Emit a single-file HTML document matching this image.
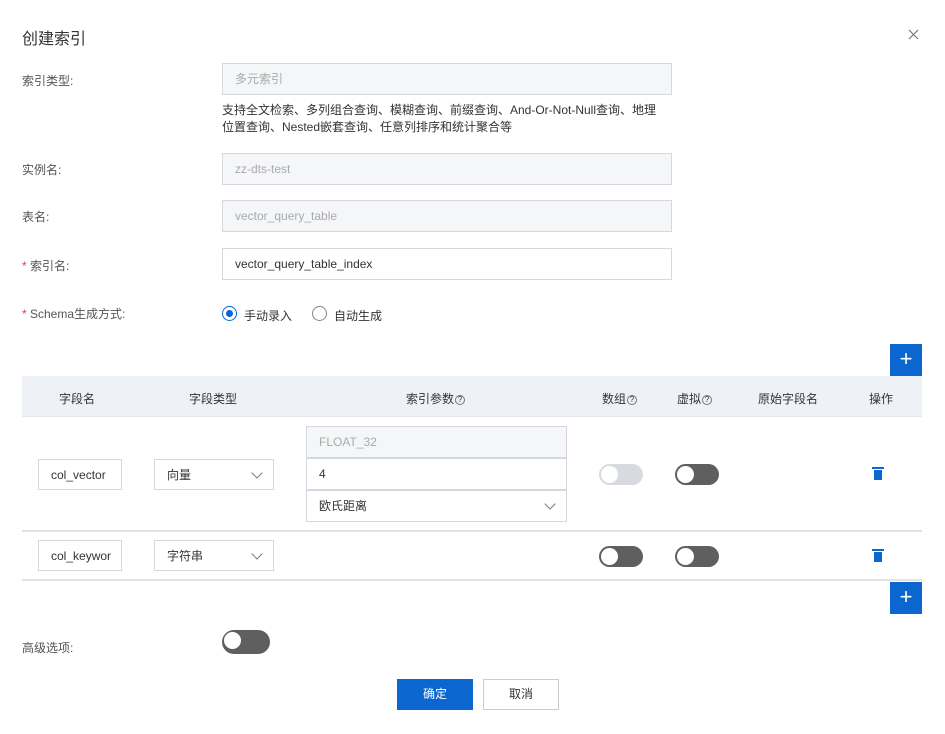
<!DOCTYPE html><html><head><meta charset="utf-8"><style>
*{box-sizing:border-box;margin:0;padding:0}
body{width:945px;height:734px;background:#fff;font-family:"Liberation Sans","Noto Sans CJK SC",sans-serif;font-size:12px;color:#333;position:relative;overflow:hidden}
.a{position:absolute}
.inp{position:absolute;border:1px solid #d5d8de;height:32px;line-height:30px;padding-left:12px;background:#fff;color:#333}
.dis{background:#f5f6f8;color:#aaa}
.lbl{position:absolute;left:22px;color:#555}
.req{color:#e4393c}
.tg{position:absolute;width:44px;height:21px;border-radius:11px;background:#5f5f5f}
.tg:after{content:"";position:absolute;left:2px;top:2px;width:17px;height:17px;border-radius:50%;background:#fff}
.tg.d{background:#d7dadf}
.th{position:absolute;top:390px;color:#333;text-align:center}
.plus{position:absolute;width:32px;height:32px;background:#0c66d0;color:#fff;font-size:22px;line-height:30px;text-align:center}
.chev{position:absolute;right:12px;top:9px;width:8px;height:8px;border-right:1px solid #777;border-bottom:1px solid #777;transform:rotate(45deg)}
.q{display:inline-block;width:10px;height:10px;border:1px solid #777;border-radius:50%;font-size:8px;line-height:8px;text-align:center;vertical-align:1px;margin-left:1px}
.trash{position:absolute;width:8px;height:10px;background:#0c66d0}
.trash:before{content:"";position:absolute;left:-2px;top:-3px;width:12px;height:2px;background:#0c66d0}
</style></head><body>
<div class="a" style="left:22px;top:25px;font-size:16px;color:#333">创建索引</div>
<svg class="a" style="left:908px;top:29px" width="11" height="11"><path d="M1 1L10 10M10 1L1 10" stroke="#777" stroke-width="1.2"/></svg>
<div class="lbl" style="top:72px">索引类型:</div>
<div class="inp dis" style="left:222px;top:63px;width:450px">多元索引</div>
<div class="a" style="left:222px;top:102px;line-height:17px;width:450px">支持全文检索、多列组合查询、模糊查询、前缀查询、And-Or-Not-Null查询、地理<br>位置查询、Nested嵌套查询、任意列排序和统计聚合等</div>
<div class="lbl" style="top:161px">实例名:</div>
<div class="inp dis" style="left:222px;top:153px;width:450px">zz-dts-test</div>
<div class="lbl" style="top:208px">表名:</div>
<div class="inp dis" style="left:222px;top:200px;width:450px">vector_query_table</div>
<div class="lbl" style="top:257px"><span class="req">*</span> 索引名:</div>
<div class="inp" style="left:222px;top:248px;width:450px">vector_query_table_index</div>
<div class="lbl" style="top:305px"><span class="req">*</span> Schema生成方式:</div>
<div class="a" style="left:222px;top:306px;width:15px;height:15px;border:1px solid #0c66d0;border-radius:50%"><div style="margin:3px;width:7px;height:7px;border-radius:50%;background:#0c66d0"></div></div>
<div class="a" style="left:244px;top:307px">手动录入</div>
<div class="a" style="left:312px;top:306px;width:15px;height:15px;border:1px solid #888;border-radius:50%"></div>
<div class="a" style="left:334px;top:307px">自动生成</div>
<div class="plus" style="left:890px;top:344px">+</div>
<div class="a" style="left:22px;top:376px;width:900px;height:41px;background:#eef1f6;border-bottom:1px solid #e3e6eb"></div>
<div class="th" style="left:59px">字段名</div>
<div class="th" style="left:189px">字段类型</div>
<div class="th" style="left:406px">索引参数<span class="q">?</span></div>
<div class="th" style="left:602px">数组<span class="q">?</span></div>
<div class="th" style="left:677px">虚拟<span class="q">?</span></div>
<div class="th" style="left:758px">原始字段名</div>
<div class="th" style="left:869px">操作</div>
<div class="inp" style="left:38px;top:459px;width:84px;height:31px;padding-left:12px">col_vector</div>
<div class="inp" style="left:154px;top:459px;width:120px;height:31px">向量<div class="chev"></div></div>
<div class="inp dis" style="left:306px;top:426px;width:261px">FLOAT_32</div>
<div class="inp" style="left:306px;top:458px;width:261px">4</div>
<div class="inp" style="left:306px;top:490px;width:261px">欧氏距离<div class="chev"></div></div>
<div class="tg d" style="left:599px;top:464px"></div>
<div class="tg" style="left:675px;top:464px"></div>
<div class="trash" style="left:874px;top:470px"></div>
<div class="a" style="left:22px;top:530px;width:900px;height:2px;background:#e3e3e3"></div>
<div class="inp" style="left:38px;top:540px;width:84px;height:31px;padding-left:12px">col_keywor</div>
<div class="inp" style="left:154px;top:540px;width:120px;height:31px">字符串<div class="chev"></div></div>
<div class="tg" style="left:599px;top:546px"></div>
<div class="tg" style="left:675px;top:546px"></div>
<div class="trash" style="left:874px;top:552px"></div>
<div class="a" style="left:22px;top:579px;width:900px;height:2px;background:#e3e3e3"></div>
<div class="plus" style="left:890px;top:582px">+</div>
<div class="lbl" style="top:639px">高级选项:</div>
<div class="tg" style="left:222px;top:630px;width:48px;height:24px;border-radius:12px"></div>
<div class="a" style="left:397px;top:679px;width:76px;height:31px;background:#0c66d0;color:#fff;text-align:center;line-height:31px">确定</div>
<div class="a" style="left:483px;top:679px;width:76px;height:31px;border:1px solid #ccc;text-align:center;line-height:29px">取消</div>
</body></html>
